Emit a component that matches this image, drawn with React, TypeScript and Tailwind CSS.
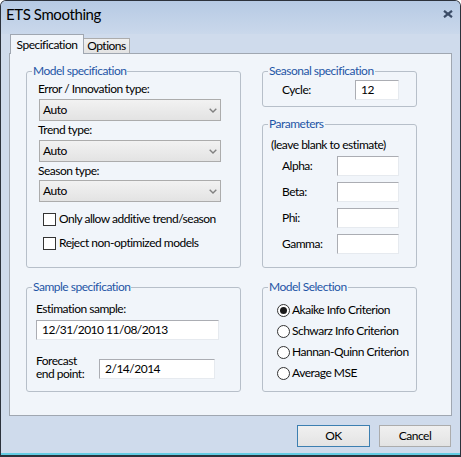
import { type ReactNode } from 'react'

function Legend({ children }: { children: ReactNode }) {
  return (
    <legend className="ml-[5px] px-[1px] text-[12px] leading-[16px] text-[#1f55a6]">
      {children}
    </legend>
  )
}

function Group({ title, className, children }: { title: string; className: string; children: ReactNode }) {
  return (
    <fieldset className={`border border-[#b7bfc9] rounded-[3px] ${className}`}>
      <Legend>{title}</Legend>
      {children}
    </fieldset>
  )
}

function Select({ value }: { value: string }) {
  return (
    <div className="ml-[1px] w-[182px] h-[22px] border border-[#acacac] bg-linear-to-b from-[#f2f2f2] to-[#e3e3e3] flex items-center justify-between pl-[3px] pr-[3px]">
      <span>{value}</span>
      <svg width="8" height="5" viewBox="0 0 8 5">
        <path d="M0.7 0.7 L4 4 L7.3 0.7" fill="none" stroke="#808080" strokeWidth="1.4" />
      </svg>
    </div>
  )
}

function TextBox({ value, className }: { value?: string; className: string }) {
  return (
    <div
      className={`h-[20px] bg-white border border-t-[#abadb3] border-l-[#abadb3] border-r-[#e6eaef] border-b-[#e6eaef] pl-[5px] flex items-center whitespace-nowrap ${className}`}
    >
      {value}
    </div>
  )
}

function CheckRow({ label }: { label: string }) {
  return (
    <div className="h-[16px] ml-[5px] flex items-center gap-[3px] whitespace-nowrap">
      <div className="w-[13px] h-[13px] border border-[#333333] bg-white" />
      <span>{label}</span>
    </div>
  )
}

function RadioRow({ label, checked }: { label: string; checked?: boolean }) {
  return (
    <div className="h-[16px] flex items-center gap-[2px] whitespace-nowrap">
      <div className="w-[13px] h-[13px] shrink-0 rounded-full border border-[#333333] bg-white flex items-center justify-center">
        {checked && <div className="w-[7px] h-[7px] rounded-full bg-[#1a1a1a]" />}
      </div>
      <span>{label}</span>
    </div>
  )
}

function ParamRow({ label }: { label: string }) {
  return (
    <div className="h-[20px] pl-[11px] flex items-center">
      <span className="w-[55px]">{label}</span>
      <TextBox className="w-[62px]" />
    </div>
  )
}

export default function App() {
  return (
    <div className="w-[461px] h-[457px] bg-[#cfdbec] border border-b-[2px] border-[#2c323c] rounded-t-[6px] flex flex-col overflow-hidden font-['Lato','Noto_Sans',sans-serif] text-[12px] leading-[16px] tracking-[-0.5px] text-black">
      {/* Title bar */}
      <div className="h-[33px] shrink-0 bg-linear-to-b from-[#b6cae4] to-[#cad8eb] flex items-start justify-between pl-[5px] pr-[7px] pt-[3px]">
        <span className="text-[15px] leading-[20px] tracking-[-0.4px]">ETS Smoothing</span>
        <svg width="10" height="8" viewBox="0 0 10 8" className="mt-[6px]">
          <path d="M1 0.8 L9 7.2 M9 0.8 L1 7.2" stroke="#3b4c66" strokeWidth="2.2" />
        </svg>
      </div>

      <div className="mx-[8px]">
        {/* Tabs */}
        <div className="flex items-end h-[19px]">
          <div className="relative z-10 ml-[1px] w-[74px] h-[20px] -mb-px border border-b-0 border-[#a0a7b1] bg-[#f1f5fa] flex justify-center pt-[2px]">
            Specification
          </div>
          <div className="w-[46px] h-[15px] border border-b-0 border-l-0 border-[#acacac] bg-linear-to-b from-[#f0f0f0] to-[#e3e3e3] flex justify-center leading-[14px]">
            Options
          </div>
        </div>

        {/* Panel */}
        <div className="h-[363px] border border-[#a0a7b1] bg-[#f1f5fa] pt-[9px] pl-[16px]">
          <div className="grid grid-cols-[215px_155px] gap-x-[21px] gap-y-[11px]">
            <Group title="Model specification" className="h-[205px]">
              <div className="pl-[11px]">
                <div className="mt-[2px]">Error / Innovation type:</div>
                <div className="mt-[2px]">
                  <Select value="Auto" />
                </div>
                <div className="mt-[1px]">Trend type:</div>
                <div className="mt-[2px]">
                  <Select value="Auto" />
                </div>
                <div className="mt-[1px]">Season type:</div>
                <div className="mt-[1px]">
                  <Select value="Auto" />
                </div>
                <div className="mt-[9px]">
                  <CheckRow label="Only allow additive trend/season" />
                </div>
                <div className="mt-[8px]">
                  <CheckRow label="Reject non-optimized models" />
                </div>
              </div>
            </Group>

            <div className="flex flex-col gap-[9px]">
              <Group title="Seasonal specification" className="h-[44px]">
                <div className="pl-[19px] mt-[1px] h-[20px] flex items-center">
                  <span className="w-[73px]">Cycle:</span>
                  <TextBox value="12" className="w-[44px]" />
                </div>
              </Group>
              <Group title="Parameters" className="h-[152px]">
                <div className="pl-[8px]">
                  <div className="mt-[5px] whitespace-nowrap">(leave blank to estimate)</div>
                  <div className="mt-[3px] flex flex-col gap-[6px]">
                    <ParamRow label="Alpha:" />
                    <ParamRow label="Beta:" />
                    <ParamRow label="Phi:" />
                    <ParamRow label="Gamma:" />
                  </div>
                </div>
              </Group>
            </div>

            <Group title="Sample specification" className="h-[113px]">
              <div className="pl-[9px]">
                <div className="mt-[6px]">Estimation sample:</div>
                <TextBox value="12/31/2010 11/08/2013" className="mt-[3px] w-[183px]" />
                <div className="mt-[14px] flex items-start">
                  <div className="w-[63px] leading-[13px]">
                    Forecast
                    <br />
                    end point:
                  </div>
                  <TextBox value="2/14/2014" className="mt-[5px] w-[116px]" />
                </div>
              </div>
            </Group>

            <Group title="Model Selection" className="h-[113px]">
              <div className="pl-[14px] mt-[7px] flex flex-col gap-[5px]">
                <RadioRow label="Akaike Info Criterion" checked />
                <RadioRow label="Schwarz Info Criterion" />
                <RadioRow label="Hannan-Quinn Criterion" />
                <RadioRow label="Average MSE" />
              </div>
            </Group>
          </div>
        </div>
      </div>

      {/* Buttons */}
      <div className="mt-[9px] flex justify-end gap-[9px] pr-[9px]">
        <button className="w-[73px] h-[22px] border border-[#3c7fb1] bg-linear-to-b from-[#f0f0f0] to-[#e3e3e3]">
          OK
        </button>
        <button className="w-[72px] h-[22px] border border-[#acacac] bg-linear-to-b from-[#f0f0f0] to-[#e3e3e3]">
          Cancel
        </button>
      </div>

      <div className="mt-auto h-[2px] bg-[#63cde4]" />
    </div>
  )
}
